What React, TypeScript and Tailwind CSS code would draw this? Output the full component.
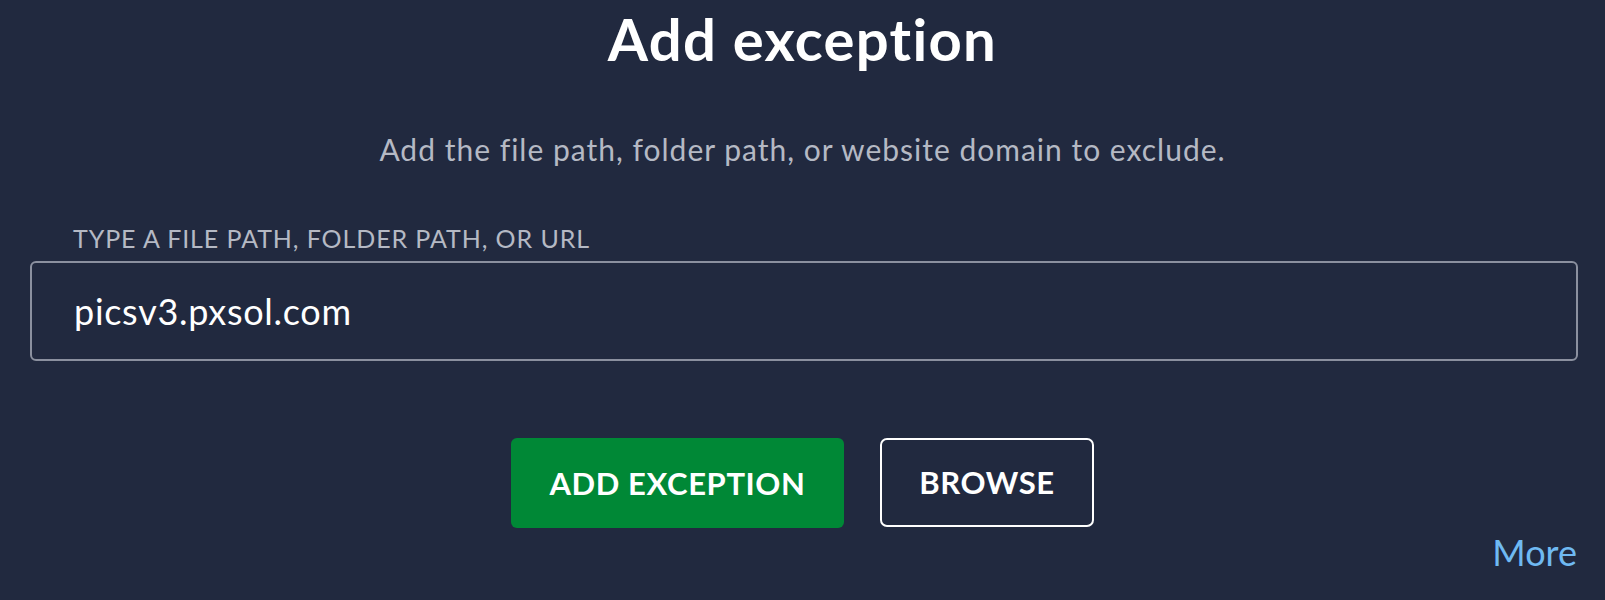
export default function App() {
  return (
    <div
      className="w-[1605px] h-[600px] bg-[#21293f] overflow-hidden flex flex-col"
      style={{ fontFamily: '"Lato", "Noto Sans", sans-serif' }}
    >
      {/* Heading */}
      <h1 className="mt-[4px] h-[70px] flex items-center justify-center text-[58px] font-bold text-white leading-none tracking-[1.3px]">
        Add exception
      </h1>

      <p className="mt-[57px] h-[36px] flex items-center justify-center text-[30px] text-[#b5b9c4] leading-none tracking-[1px]">
        Add the file path, folder path, or website domain to exclude.
      </p>

      {/* Path field */}
      <div className="mt-[56px] ml-[30px] mr-[27px] flex flex-col">
        <label className="ml-[43px] h-[30px] flex items-center text-[25px] text-[#b5b9c4] leading-none tracking-[0.9px]">
          TYPE A FILE PATH, FOLDER PATH, OR URL
        </label>
        <div className="mt-[8px] h-[100px] rounded-[6px] border-2 border-[#8b909f] flex items-center pl-[42px]">
          <span className="text-[36px] text-white leading-none tracking-[0.7px]">picsv3.pxsol.com</span>
        </div>
      </div>

      {/* Actions */}
      <div className="mt-[77px] flex justify-center gap-[36px]">
        <button className="w-[333px] h-[90px] rounded-[6px] bg-[#008836] text-white text-[31px] font-bold leading-none tracking-[0.6px]">
          ADD EXCEPTION
        </button>
        <button className="w-[214px] h-[89px] rounded-[7px] border-2 border-white text-white text-[31px] font-bold leading-none tracking-[0.6px]">
          BROWSE
        </button>
      </div>

      <div className="mt-[6px] mr-[28px] flex justify-end">
        <a className="text-[36px] text-[#6fb9f2] leading-none cursor-pointer">More</a>
      </div>
    </div>
  );
}
